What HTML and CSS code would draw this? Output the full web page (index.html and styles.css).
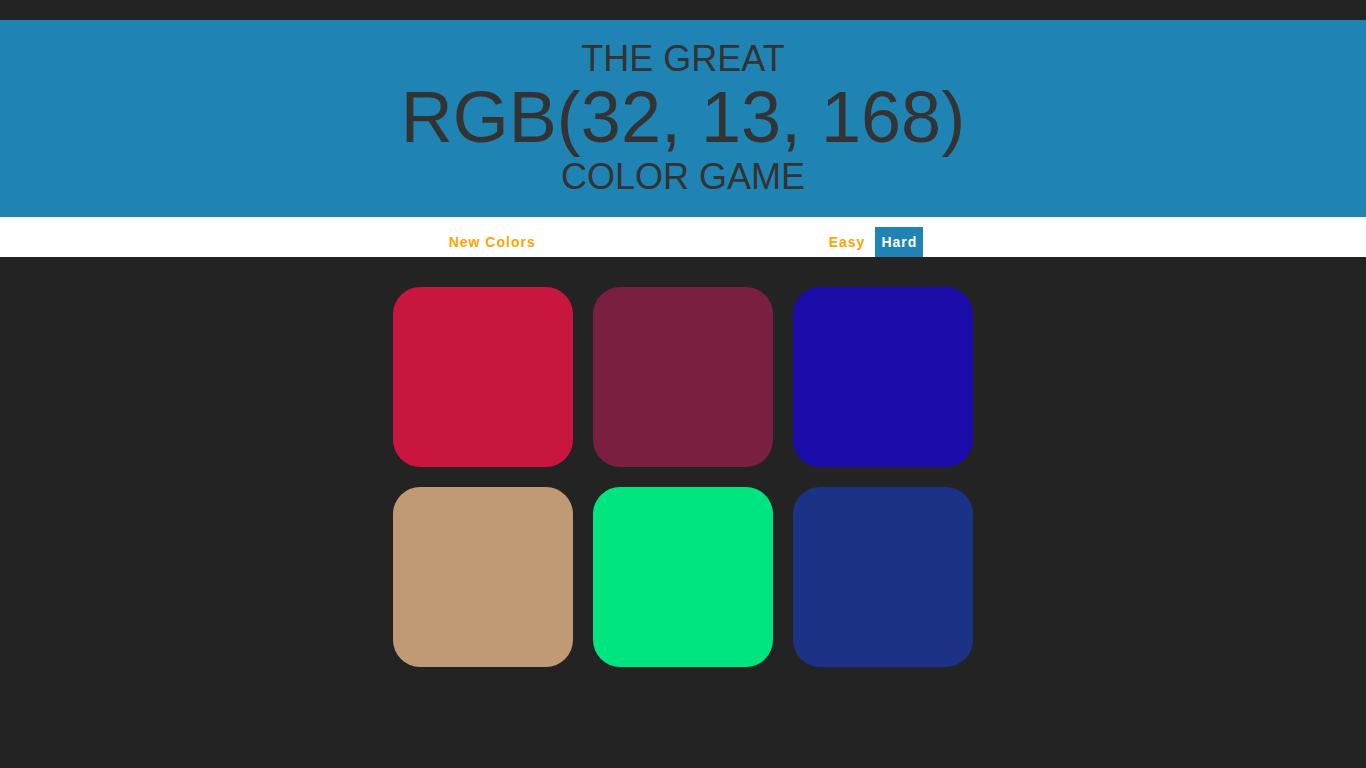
FILE: index.html
```html
<!DOCTYPE html>
<html lang="en">
<head>
<meta charset="utf-8">
<title>Color Game</title>
<link rel="stylesheet" href="styles.css">
</head>
<body>
  <div class="topbar"></div>
  <h1 class="header">
    <span class="line small l1">THE GREAT</span>
    <span class="line big">RGB(32, 13, 168)</span>
    <span class="line small l3">COLOR GAME</span>
  </h1>
  <div class="stripe">
    <button class="btn">New Colors</button>
    <span class="message"></span>
    <button class="btn">Easy</button>
    <button class="btn selected">Hard</button>
  </div>
  <div class="board">
    <div class="square sq1"></div>
    <div class="square sq2"></div>
    <div class="square sq3"></div>
    <div class="square sq4"></div>
    <div class="square sq5"></div>
    <div class="square sq6"></div>
  </div>
</body>
</html>
```
FILE: styles.css
```css
html, body {
  margin: 0;
  padding: 0;
  background: #232323;
  font-family: "Liberation Sans", Arial, sans-serif;
  height: 100%;
}
.topbar {
  height: 20px;
}
.header {
  margin: 0;
  background: #1f84b4;
  color: #333333;
  font-weight: normal;
  text-align: center;
  padding: 20px 0 21px;
}
.line {
  display: block;
}
.small {
  font-size: 36px;
}
.l1 { line-height: 37px; }
.l3 { line-height: 39px; }
.big {
  font-size: 72px;
  line-height: 80px;
}
.stripe {
  background: #ffffff;
  height: 40px;
  display: flex;
  justify-content: center;
  align-items: flex-end;
}
.message {
  width: 281px;
}
.btn {
  border: none;
  background: #ffffff;
  color: #ffa500;
  font-family: "Liberation Sans", Arial, sans-serif;
  font-weight: bold;
  font-size: 14px;
  letter-spacing: 1px;
  height: 30px;
  padding: 0 6px;
  margin: 0;
  outline: none;
}
.btn + .btn {
  margin-left: 4px;
}
.btn.selected {
  background: #1f84b4;
  color: #ffffff;
}
.board {
  width: 600px;
  margin: 20px auto 0;
  display: flex;
  flex-wrap: wrap;
}
.square {
  width: 180px;
  height: 180px;
  margin: 10px;
  border-radius: 15%;
}
.sq1 { background: rgb(200, 22, 62); }
.sq2 { background: rgb(122, 31, 66); }
.sq3 { background: rgb(27, 11, 168); }
.sq4 { background: rgb(192, 154, 116); }
.sq5 { background: rgb(0, 229, 128); }
.sq6 { background: rgb(27, 50, 135); }
```
